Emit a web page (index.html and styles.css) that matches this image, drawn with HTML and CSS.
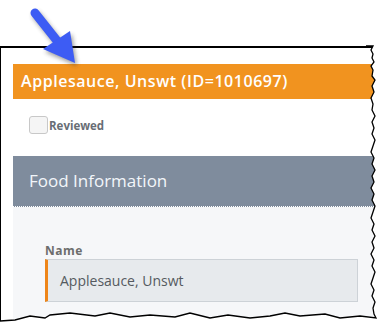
FILE: index.html
```html
<!DOCTYPE html>
<html>
<head>
<meta charset="utf-8">
<link rel="stylesheet" href="styles.css">
</head>
<body>
<div class="shot">
  <div class="frame">
    <div class="content">
      <div class="title">Applesauce, Unswt (ID=1010697)</div>
      <div class="review"><span class="box"></span><span class="review-label">Reviewed</span></div>
      <section class="panel">
        <div class="panel-head">Food Information</div>
        <div class="panel-body">
          <div class="field-label">Name</div>
          <div class="input">Applesauce, Unswt</div>
        </div>
      </section>
    </div>
  </div>
  <svg class="overlay" width="378" height="324" viewBox="0 0 378 324" xmlns="http://www.w3.org/2000/svg">
    <defs>
      <filter id="blur" x="-50%" y="-50%" width="200%" height="200%">
        <feGaussianBlur stdDeviation="2"/>
      </filter>
    </defs>
    <polygon fill="#ffffff" points="373,46 371,50 373,54 372,58 374,62 371,66 373,70 372,76 375,80 372,86 374,92 371,98 373,104 372,110 375,116 372,122 374,128 372,134 375,140 373,146 371,152 374,158 372,164 375,170 372,176 374,182 371,188 374,194 372,200 375,206 373,212 371,218 374,224 372,230 375,236 372,242 374,248 371,254 374,260 372,266 375,272 373,278 371,284 374,290 372,296 375,302 373,308 374,314 376,318 360,316 340,318 325,314 300,316 285,313 270,316 250,318 228,315 210,318 190,313 175,317 150,315 130,317 110,313 95,316 70,313 50,315 45,318 30,316 15,320 0,321 0,324 378,324 378,46"/>
    <polyline fill="none" stroke="#000" stroke-width="1.3" points="366,46 373,46 371,50 373,54 372,58 374,62 371,66 373,70 372,76 375,80 372,86 374,92 371,98 373,104 372,110 375,116 372,122 374,128 372,134 375,140 373,146 371,152 374,158 372,164 375,170 372,176 374,182 371,188 374,194 372,200 375,206 373,212 371,218 374,224 372,230 375,236 372,242 374,248 371,254 374,260 372,266 375,272 373,278 371,284 374,290 372,296 375,302 373,308 374,314 376,318 360,316 340,318 325,314 300,316 285,313 270,316 250,318 228,315 210,318 190,313 175,317 150,315 130,317 110,313 95,316 70,313 50,315 45,318 30,316 15,320 0,321"/>
    <g filter="url(#blur)" opacity="0.45" transform="translate(2,3)">
      <line x1="35" y1="13" x2="58" y2="42" stroke="#333" stroke-width="9" stroke-linecap="round"/>
      <polygon points="43,49 70,31 75,63" fill="#333"/>
    </g>
    <line x1="35" y1="13" x2="58" y2="42" stroke="#3d5cf4" stroke-width="9" stroke-linecap="round"/>
    <polygon points="43,49 70,31 75,63" fill="#3d5cf4"/>
  </svg>
</div>
</body>
</html>
```
FILE: styles.css
```css
html, body {
  margin: 0;
  padding: 0;
  background: #ffffff;
}
.shot {
  position: relative;
  width: 378px;
  height: 324px;
  overflow: hidden;
}
.frame {
  margin-top: 46px;
  height: 278px;
  border-top: 2px solid #000;
  border-left: 1px solid #000;
  box-sizing: border-box;
  overflow: hidden;
  padding: 16px 0 0 12px;
}
.content {
  width: 377px;
}
.title {
  height: 35px;
  line-height: 35px;
  background: #f1931f;
  color: #ffffff;
  font-family: "Open Sans", sans-serif;
  font-weight: 600;
  font-size: 16px;
  letter-spacing: 0.55px;
  padding-left: 8px;
  white-space: nowrap;
}
.review {
  display: flex;
  align-items: center;
  margin: 17px 0 0 16px;
  height: 18px;
}
.box {
  width: 17px;
  height: 16px;
  border: 1px solid #c8c8c8;
  border-radius: 3px;
  background: #f5f5f5;
}
.review-label {
  font-family: "Open Sans", sans-serif;
  font-weight: 700;
  font-size: 11.5px;
  color: #686d75;
  margin-left: 1px;
  padding-top: 1px;
}
.panel {
  margin-top: 22px;
}
.panel-head {
  height: 51px;
  box-sizing: border-box;
  background: #7f8c9d;
  border-bottom: 1px dotted #ffffff;
  color: #f2f6fa;
  font-family: "Open Sans", sans-serif;
  font-weight: 400;
  font-size: 17px;
  line-height: 50px;
  padding-left: 16px;
}
.panel-body {
  background: #f6f7f9;
  padding: 37px 32px 40px 32px;
}
.field-label {
  font-family: "Open Sans", sans-serif;
  font-weight: 700;
  font-size: 12px;
  letter-spacing: 0.5px;
  color: #6d6d6d;
  line-height: 14px;
  margin-bottom: 1px;
}
.input {
  height: 43px;
  box-sizing: border-box;
  background: #e7eaed;
  border: 1px solid #cdd2d7;
  border-left: 3px solid #ee8519;
  font-family: "Open Sans", sans-serif;
  font-size: 14px;
  color: #555a60;
  line-height: 41px;
  padding-left: 12px;
}
.overlay {
  position: absolute;
  left: 0;
  top: 0;
}
```
